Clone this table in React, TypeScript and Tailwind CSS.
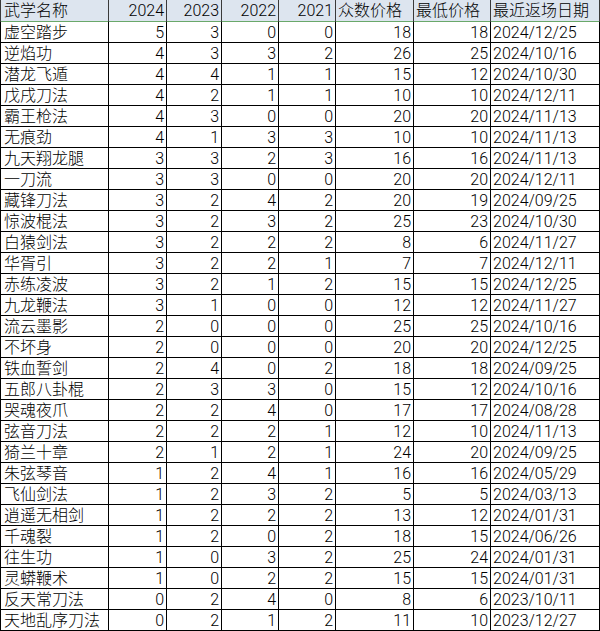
import React from 'react';

type Row = [string, number, number, number, number, number, number, string];

const rows: Row[] = [
  ['虚空踏步', 5, 3, 0, 0, 18, 18, '2024/12/25'],
  ['逆焰功', 4, 3, 3, 2, 26, 25, '2024/10/16'],
  ['潜龙飞遁', 4, 4, 1, 1, 15, 12, '2024/10/30'],
  ['戊戌刀法', 4, 2, 1, 1, 10, 10, '2024/12/11'],
  ['霸王枪法', 4, 3, 0, 0, 20, 20, '2024/11/13'],
  ['无痕劲', 4, 1, 3, 3, 10, 10, '2024/11/13'],
  ['九天翔龙腿', 3, 3, 2, 3, 16, 16, '2024/11/13'],
  ['一刀流', 3, 3, 0, 0, 20, 20, '2024/12/11'],
  ['藏锋刀法', 3, 2, 4, 2, 20, 19, '2024/09/25'],
  ['惊波棍法', 3, 2, 3, 2, 25, 23, '2024/10/30'],
  ['白猿剑法', 3, 2, 2, 2, 8, 6, '2024/11/27'],
  ['华胥引', 3, 2, 2, 1, 7, 7, '2024/12/11'],
  ['赤练凌波', 3, 2, 1, 2, 15, 15, '2024/12/25'],
  ['九龙鞭法', 3, 1, 0, 0, 12, 12, '2024/11/27'],
  ['流云墨影', 2, 0, 0, 0, 25, 25, '2024/10/16'],
  ['不坏身', 2, 0, 0, 0, 20, 20, '2024/12/25'],
  ['铁血誓剑', 2, 4, 0, 2, 18, 18, '2024/09/25'],
  ['五郎八卦棍', 2, 3, 3, 0, 15, 12, '2024/10/16'],
  ['哭魂夜爪', 2, 2, 4, 0, 17, 17, '2024/08/28'],
  ['弦音刀法', 2, 2, 2, 1, 12, 10, '2024/11/13'],
  ['猗兰十章', 2, 1, 2, 1, 24, 20, '2024/09/25'],
  ['朱弦琴音', 1, 2, 4, 1, 16, 16, '2024/05/29'],
  ['飞仙剑法', 1, 2, 3, 2, 5, 5, '2024/03/13'],
  ['逍遥无相剑', 1, 2, 2, 2, 13, 12, '2024/01/31'],
  ['千魂裂', 1, 2, 0, 2, 18, 15, '2024/06/26'],
  ['往生功', 1, 0, 3, 2, 25, 24, '2024/01/31'],
  ['灵蟒鞭术', 1, 0, 2, 2, 15, 15, '2024/01/31'],
  ['反天常刀法', 0, 2, 4, 0, 8, 6, '2023/10/11'],
  ['天地乱序刀法', 0, 2, 1, 2, 11, 10, '2023/12/27'],
];

const cols = 'grid grid-cols-[108px_58px_55px_57px_57px_78px_77px_110px]';

export default function App() {
  return (
    <div
      className="w-[600px] h-[631px] bg-white text-black text-[16px] font-light overflow-hidden"
      style={{ fontFamily: 'Roboto, "Noto Sans CJK SC", sans-serif' }}
    >
      {/* Header */}
      <div className={`${cols} h-[22px] bg-[#dde5ef] border-b border-[#6aa86a] leading-[22px]`}>
        <div className="border-l border-[#3a3a3a] pl-[3px]">武学名称</div>
        <div className="border-l border-[#3a3a3a] pr-[2px] text-right">2024</div>
        <div className="border-l border-[#3a3a3a] pr-[2px] text-right">2023</div>
        <div className="border-l border-[#3a3a3a] pr-[2px] text-right">2022</div>
        <div className="border-l border-[#3a3a3a] pr-[2px] text-right">2021</div>
        <div className="border-l border-[#3a3a3a] pl-[2px] whitespace-nowrap">众数价格</div>
        <div className="border-l border-[#3a3a3a] pl-[2px] whitespace-nowrap">最低价格</div>
        <div className="border-l border-r border-[#3a3a3a] pl-[2px] whitespace-nowrap">最近返场日期</div>
      </div>

      {/* Rows */}
      {rows.map((r) => (
        <div key={r[0]} className={`${cols} h-[21px] border-b border-black leading-[22px]`}>
          <div className="border-l border-black pl-[3px] whitespace-nowrap">{r[0]}</div>
          {r.slice(1, 7).map((v, i) => (
            <div key={i} className="border-l border-black pr-[2px] text-right">
              {v}
            </div>
          ))}
          <div className="border-l border-r border-black pl-[2px]">{r[7]}</div>
        </div>
      ))}
    </div>
  );
}
